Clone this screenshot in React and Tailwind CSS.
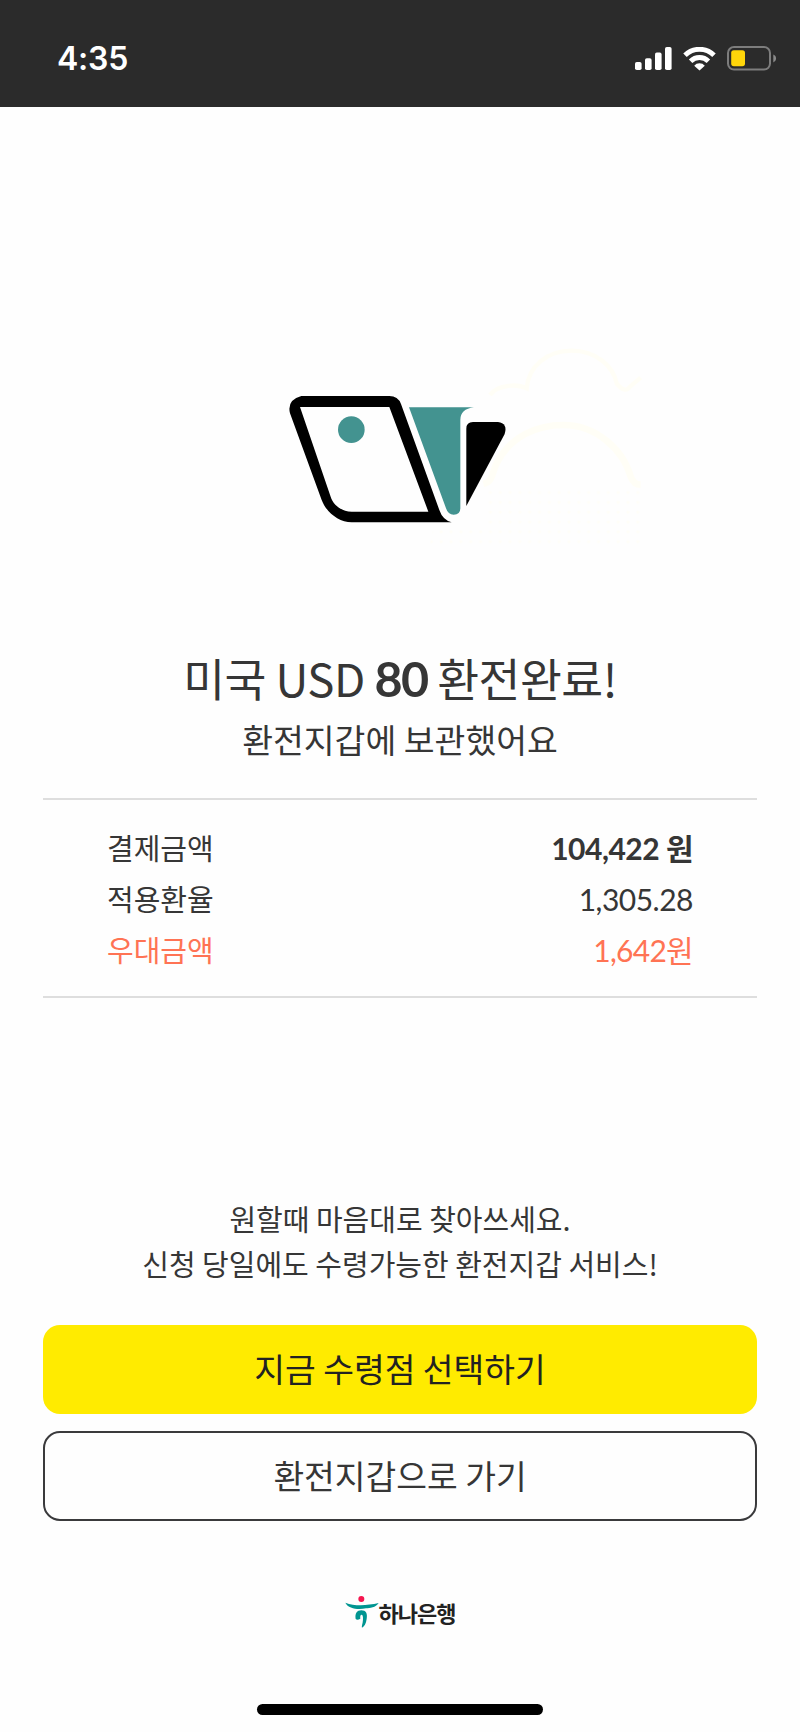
function SignalIcon() {
  return (
    <svg className="h-[24px] w-[37px]" viewBox="0 0 37 24" fill="#fff">
      <rect x="0" y="15" width="6.6" height="8" rx="1.8" />
      <rect x="10" y="11.2" width="6.6" height="11.8" rx="1.8" />
      <rect x="20" y="5.6" width="6.6" height="17.4" rx="1.8" />
      <rect x="30" y="0" width="6.6" height="23" rx="1.8" />
    </svg>
  );
}

function WifiIcon() {
  return (
    <svg className="h-[24px] w-[33px]" viewBox="0 0 33 24" fill="none" stroke="#fff" strokeWidth="5">
      <path d="M2 8.2A20.8 20.8 0 0 1 31 8.2" />
      <path d="M7.6 14.2A12.8 12.8 0 0 1 25.4 14.2" />
      <path d="M16.5 23.6L11.2 18.8A7 7 0 0 1 21.8 18.8Z" fill="#fff" stroke="none" />
    </svg>
  );
}

function BatteryIcon() {
  return (
    <svg className="h-[25px] w-[50px]" viewBox="0 0 50 25">
      <rect x="1" y="1" width="42" height="22.6" rx="6" fill="none" stroke="#7d7d7d" strokeWidth="2" />
      <rect x="4.2" y="4.2" width="13.8" height="16" rx="2.6" fill="#ffd60a" />
      <path d="M46.3 8.6C50 10 50 15 46.3 16.4Z" fill="#8a8a8a" />
    </svg>
  );
}

function WalletArt() {
  return (
    <svg className="h-[220px] w-[400px]" viewBox="0 0 1200 660" fill="none">
      <defs>
        <pattern id="dots" width="29.5" height="29.5" patternUnits="userSpaceOnUse">
          <circle cx="12" cy="15" r="5" fill="#fffef8" />
        </pattern>
      </defs>
      <path d="M490 560H640V440H1112V612H480Z" fill="url(#dots)" />
      <g stroke="#fffef6" strokeWidth="13">
        <path d="M660 165C680 135 740 130 770 145C775 80 830 32 905 32C980 32 1030 80 1040 130C1055 150 1070 155 1080 140L1112 113" />
        <path d="M640 432C670 425 665 400 680 370C720 290 800 255 880 255C980 255 1060 330 1082 410C1090 430 1100 434 1112 434" strokeWidth="20" />
      </g>
      <path
        fillRule="evenodd"
        fill="#000"
        d="M94 168H358Q384 168 393 192L508 510Q518 540 545 547H245C205 547 168 515 155 480L60 220Q50 180 94 168ZM90 201H358L475 515H245C215 515 190 495 182 470Z"
      />
      <path d="M417 202H612Q571 207 571 240V505Q571 524 551 524Q534 524 528 505Z" fill="#439390" />
      <path d="M589 498V266Q589 246 609 246H684Q714 250 704 282Z" fill="#000" />
      <circle cx="244" cy="269" r="40" fill="#439390" />
    </svg>
  );
}

function HanaMark() {
  return (
    <svg className="h-[34px] w-[34px]" viewBox="0 0 102 102">
      <circle cx="49" cy="12" r="9" fill="#f5164f" />
      <path d="M1 23C30 34 65 32 101 24C92 38 75 39 63 40C40 44 10 42 1 23Z" fill="#009591" />
      <path d="M32 72C29 56 36 46 49 46C63 46 68 56 65 72C63 86 58 95 51 98C50 96 51 94 51 91C54 80 55 68 53 62C50 56 44 60 46 71C40 75 35 75 32 72Z" fill="#009591" />
    </svg>
  );
}

function Row({ label, value, className }) {
  return (
    <div className={`flex h-[51px] items-center justify-between ${className}`}>
      <span>{label}</span>
      {value}
    </div>
  );
}

export default function App() {
  return (
    <div className="flex h-[1732px] w-[800px] flex-col bg-[#fefefe] font-['Noto_Sans_CJK_KR',sans-serif] text-[#363636]">
      <header className="flex h-[107px] shrink-0 items-center bg-[#2b2b2b] pt-[10px] pr-[23px] pl-[57px]">
        <span className="font-['Inter',sans-serif] text-[32px] leading-none font-semibold tracking-[-0.2px] text-white">4:35</span>
        <div className="ml-auto flex items-center gap-[11px]">
          <SignalIcon />
          <WifiIcon />
          <BatteryIcon />
        </div>
      </header>

      <main className="flex flex-1 flex-col px-[43px]">
        <div className="flex pt-[233px] pl-[227px]">
          <WalletArt />
        </div>

        <h1 className="mt-[87px] h-[60px] text-center text-[45.5px] leading-[60px] font-normal tracking-[-0.5px]">
          미국 USD <b className="font-['Lato','Noto_Sans_CJK_KR',sans-serif] text-[48.5px] leading-none font-bold tracking-[-1.6px]">80</b> 환전완료!
        </h1>
        <p className="mt-[10px] text-center text-[33.5px] leading-[44px]">환전지갑에 보관했어요</p>

        <section className="mt-[37px] flex h-[200px] flex-col border-y-2 border-[#dedede] px-[64px] pt-[23px] font-['Lato','Noto_Sans_CJK_KR',sans-serif] text-[29px]">
          <Row label="결제금액" value={<b className="text-[30px] font-bold tracking-[-0.5px]">104,422 원</b>} className="" />
          <Row label="적용환율" value={<span className="text-[30px] tracking-[-0.5px]">1,305.28</span>} className="" />
          <Row label="우대금액" value={<span className="text-[30px] tracking-[-0.7px]">1,642원</span>} className="text-[#ff7354]" />
        </section>

        <p className="mt-[198px] text-center text-[29px] leading-[45px]">
          원할때 마음대로 찾아쓰세요.
          <br />
          신청 당일에도 수령가능한 환전지갑 서비스!
        </p>

        <div className="mt-[39px] flex flex-col gap-[17px] text-[33.4px] leading-none">
          <button className="h-[89px] rounded-[17px] bg-[#ffeb00] pb-[3px] text-[#222]">지금 수령점 선택하기</button>
          <button className="h-[90px] rounded-[17px] border-2 border-[#3a3a3c] pb-[3px]">환전지갑으로 가기</button>
        </div>

        <div className="mt-[74px] flex items-center justify-center">
          <HanaMark />
          <span className="text-[22px] leading-none font-bold tracking-[-1px] text-[#222]">하나은행</span>
        </div>

        <div className="mt-auto mb-[17px] h-[11px] w-[286px] self-center rounded-full bg-black" />
      </main>
    </div>
  );
}
